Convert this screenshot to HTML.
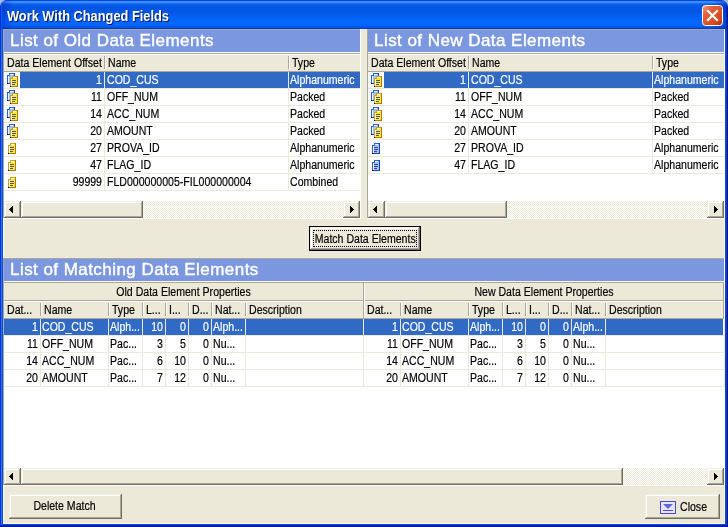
<!DOCTYPE html>
<html><head><meta charset="utf-8"><style>
html,body{margin:0;padding:0;}
body{width:728px;height:527px;position:relative;overflow:hidden;background:#A9B8DD;}
body>div,body>svg{position:absolute;}
.t{font-family:"Liberation Sans", sans-serif;font-size:12px;line-height:13px;transform:scaleX(0.88);white-space:nowrap;color:#000;filter:grayscale(1);-webkit-text-stroke:0.18px currentColor;}
</style></head><body>
<div style="left:0px;top:0px;width:728px;height:527px;background:#A9B8DD;"></div>
<div style="left:0px;top:0px;width:728px;height:29px;border-radius:7px 7px 0 0;background:linear-gradient(to bottom,#0848DC 0px,#0848DC 0.5px,#3C8EFF 1.5px,#3A8AFF 2.5px,#1A70F6 3.5px,#0A5EEA 4.5px,#0356E4 7px,#0356E4 12px,#0360F2 17px,#0567FF 21px,#0565FC 25px,#0358EC 27px,#0040CC 28.5px,#0040CC 29px);"></div>
<div style="left:0px;top:0px;width:728px;height:29px;border-radius:7px 7px 0 0;background:linear-gradient(to right,rgba(0,30,180,.45) 0px,rgba(0,30,180,0) 14px,rgba(0,30,180,0) 712px,rgba(0,30,160,.5) 728px);"></div>
<div style="left:0px;top:6px;width:1px;height:521px;background:#0032D8;"></div>
<div style="left:1px;top:4px;width:1px;height:523px;background:#1062F2;opacity:.8"></div>
<div style="left:2px;top:29px;width:1px;height:498px;background:#0250E2;"></div>
<div style="left:725px;top:29px;width:1px;height:498px;background:#0344E2;"></div>
<div style="left:726px;top:5px;width:1px;height:522px;background:#0024B4;opacity:.85"></div>
<div style="left:727px;top:7px;width:1px;height:520px;background:#001A92;"></div>
<div style="left:2px;top:524px;width:724px;height:1px;background:#0344E2;"></div>
<div style="left:1px;top:525px;width:726px;height:1px;background:#0024B4;"></div>
<div style="left:0px;top:526px;width:728px;height:1px;background:#001A92;"></div>
<div style="left:3px;top:29px;width:722px;height:495px;background:#ECE9D8;"></div>
<div style="left:724px;top:29px;width:1px;height:495px;background:#FFF8E0;"></div>
<div style="left:3px;top:29px;width:1px;height:495px;background:#FFF8E0;"></div>
<div style="left:3px;top:523px;width:722px;height:1px;background:#FFF8E0;"></div>
<div class="t" style="left:8px;top:9px;font-weight:bold;font-size:14px;line-height:16px;transform:scaleX(0.915);transform-origin:0 0;filter:none;-webkit-text-stroke:0;color:#0A1A60;">Work With Changed Fields</div>
<div class="t" style="left:7px;top:8px;font-weight:bold;font-size:14px;line-height:16px;transform:scaleX(0.915);transform-origin:0 0;filter:none;-webkit-text-stroke:0;color:#fff;">Work With Changed Fields</div>
<svg style="position:absolute;left:702px;top:5px" width="21" height="21" viewBox="0 0 21 21">
<defs><linearGradient id="cg" x1="0" y1="0" x2="1" y2="1"><stop offset="0" stop-color="#F2A088"/><stop offset="0.3" stop-color="#E5603A"/><stop offset="0.75" stop-color="#D8481E"/><stop offset="1" stop-color="#B8300A"/></linearGradient></defs>
<rect x="0.5" y="0.5" width="20" height="20" rx="3" fill="url(#cg)" stroke="#fff"/>
<path d="M6 6L15 15M15 6L6 15" stroke="#fff" stroke-width="2.2" stroke-linecap="square"/>
</svg>
<div style="left:3px;top:29px;width:358px;height:190px;background:#fff;"></div>
<div style="left:3px;top:29px;width:357px;height:1px;background:#ACA899;"></div>
<div style="left:3px;top:29px;width:1px;height:189px;background:#ACA899;"></div>
<div style="left:360px;top:29px;width:1px;height:190px;background:#fff;"></div>
<div style="left:3px;top:218px;width:358px;height:1px;background:#fff;"></div>
<div style="left:4px;top:30px;width:356px;height:22px;background:#7B97DF;"></div>
<div class="t" style="left:10px;top:31px;font-size:17px;line-height:20px;color:#fff;letter-spacing:0.45px;transform:none;-webkit-text-stroke:0.4px #fff">List of Old Data Elements</div>
<div style="left:4px;top:52px;width:356px;height:1px;background:#fff;"></div>
<div style="left:4px;top:53px;width:356px;height:1px;background:#ACA899;"></div>
<div style="left:4px;top:54px;width:356px;height:17px;background:#ECE9D8;"></div>
<div style="left:4px;top:54px;width:356px;height:1px;background:#fff;"></div>
<div style="left:4px;top:71px;width:356px;height:1px;background:#ACA899;"></div>
<div style="left:104px;top:56px;width:1px;height:13px;background:#ACA899;"></div>
<div style="left:105px;top:56px;width:1px;height:13px;background:#fff;"></div>
<div style="left:288px;top:56px;width:1px;height:13px;background:#ACA899;"></div>
<div style="left:289px;top:56px;width:1px;height:13px;background:#fff;"></div>
<div class="t" style="left:7px;top:57px;transform-origin:0 0;">Data Element Offset</div>
<div class="t" style="left:108px;top:57px;transform-origin:0 0;">Name</div>
<div class="t" style="left:292px;top:57px;transform-origin:0 0;">Type</div>
<div style="left:20px;top:72px;width:84px;height:16px;background:#316AC5;"></div>
<div style="left:105px;top:72px;width:183px;height:16px;background:#316AC5;"></div>
<div style="left:289px;top:72px;width:71px;height:16px;background:#316AC5;"></div>
<div style="left:4px;top:88px;width:356px;height:1px;background:#ECE9D8;"></div>
<svg style="position:absolute;left:6px;top:72px" width="16" height="16" shape-rendering="crispEdges"><rect x="2" y="3" width="6" height="8" fill="#9EC4FF"/><rect x="4" y="2" width="4" height="1" fill="#9EC4FF"/><rect x="2" y="4" width="1" height="7" fill="#F4F8FF"/><rect x="4" y="2" width="3" height="1" fill="#F4F8FF"/><rect x="3" y="1" width="6" height="1" fill="#2A5EE0"/><rect x="3" y="1" width="1" height="3" fill="#2A5EE0"/><rect x="1" y="3" width="3" height="1" fill="#2A5EE0"/><rect x="1" y="3" width="1" height="9" fill="#2A5EE0"/><rect x="8" y="1" width="1" height="11" fill="#1A3FC0"/><rect x="1" y="11" width="8" height="1" fill="#1A3FC0"/><rect x="1" y="11" width="1" height="1" fill="#000"/><rect x="5" y="6" width="6" height="8" fill="#FFE838"/><rect x="7" y="5" width="4" height="1" fill="#FFE838"/><rect x="5" y="7" width="1" height="7" fill="#FFFCE0"/><rect x="7" y="5" width="3" height="1" fill="#FFFCE0"/><rect x="6" y="4" width="6" height="1" fill="#D0A020"/><rect x="6" y="4" width="1" height="3" fill="#D0A020"/><rect x="4" y="6" width="3" height="1" fill="#D0A020"/><rect x="4" y="6" width="1" height="9" fill="#D0A020"/><rect x="11" y="4" width="1" height="11" fill="#B07A08"/><rect x="4" y="14" width="8" height="1" fill="#B07A08"/><rect x="6" y="8" width="4" height="1" fill="#4E5678"/><rect x="6" y="10" width="4" height="1" fill="#4E5678"/><rect x="6" y="12" width="3" height="1" fill="#4E5678"/><rect x="4" y="14" width="1" height="1" fill="#000"/></svg>
<div class="t" style="left:4px;top:74px;width:98px;text-align:right;transform-origin:100% 0;color:#fff;">1</div>
<div class="t" style="left:107px;top:74px;transform-origin:0 0;color:#fff;">COD_CUS</div>
<div class="t" style="left:290px;top:74px;transform-origin:0 0;color:#fff;">Alphanumeric</div>
<div style="left:4px;top:105px;width:356px;height:1px;background:#ECE9D8;"></div>
<svg style="position:absolute;left:6px;top:89px" width="16" height="16" shape-rendering="crispEdges"><rect x="2" y="3" width="6" height="8" fill="#9EC4FF"/><rect x="4" y="2" width="4" height="1" fill="#9EC4FF"/><rect x="2" y="4" width="1" height="7" fill="#F4F8FF"/><rect x="4" y="2" width="3" height="1" fill="#F4F8FF"/><rect x="3" y="1" width="6" height="1" fill="#2A5EE0"/><rect x="3" y="1" width="1" height="3" fill="#2A5EE0"/><rect x="1" y="3" width="3" height="1" fill="#2A5EE0"/><rect x="1" y="3" width="1" height="9" fill="#2A5EE0"/><rect x="8" y="1" width="1" height="11" fill="#1A3FC0"/><rect x="1" y="11" width="8" height="1" fill="#1A3FC0"/><rect x="1" y="11" width="1" height="1" fill="#000"/><rect x="5" y="6" width="6" height="8" fill="#FFE838"/><rect x="7" y="5" width="4" height="1" fill="#FFE838"/><rect x="5" y="7" width="1" height="7" fill="#FFFCE0"/><rect x="7" y="5" width="3" height="1" fill="#FFFCE0"/><rect x="6" y="4" width="6" height="1" fill="#D0A020"/><rect x="6" y="4" width="1" height="3" fill="#D0A020"/><rect x="4" y="6" width="3" height="1" fill="#D0A020"/><rect x="4" y="6" width="1" height="9" fill="#D0A020"/><rect x="11" y="4" width="1" height="11" fill="#B07A08"/><rect x="4" y="14" width="8" height="1" fill="#B07A08"/><rect x="6" y="8" width="4" height="1" fill="#4E5678"/><rect x="6" y="10" width="4" height="1" fill="#4E5678"/><rect x="6" y="12" width="3" height="1" fill="#4E5678"/><rect x="4" y="14" width="1" height="1" fill="#000"/></svg>
<div class="t" style="left:4px;top:91px;width:98px;text-align:right;transform-origin:100% 0;color:#000;">11</div>
<div class="t" style="left:107px;top:91px;transform-origin:0 0;color:#000;">OFF_NUM</div>
<div class="t" style="left:290px;top:91px;transform-origin:0 0;color:#000;">Packed</div>
<div style="left:4px;top:122px;width:356px;height:1px;background:#ECE9D8;"></div>
<svg style="position:absolute;left:6px;top:106px" width="16" height="16" shape-rendering="crispEdges"><rect x="2" y="3" width="6" height="8" fill="#9EC4FF"/><rect x="4" y="2" width="4" height="1" fill="#9EC4FF"/><rect x="2" y="4" width="1" height="7" fill="#F4F8FF"/><rect x="4" y="2" width="3" height="1" fill="#F4F8FF"/><rect x="3" y="1" width="6" height="1" fill="#2A5EE0"/><rect x="3" y="1" width="1" height="3" fill="#2A5EE0"/><rect x="1" y="3" width="3" height="1" fill="#2A5EE0"/><rect x="1" y="3" width="1" height="9" fill="#2A5EE0"/><rect x="8" y="1" width="1" height="11" fill="#1A3FC0"/><rect x="1" y="11" width="8" height="1" fill="#1A3FC0"/><rect x="1" y="11" width="1" height="1" fill="#000"/><rect x="5" y="6" width="6" height="8" fill="#FFE838"/><rect x="7" y="5" width="4" height="1" fill="#FFE838"/><rect x="5" y="7" width="1" height="7" fill="#FFFCE0"/><rect x="7" y="5" width="3" height="1" fill="#FFFCE0"/><rect x="6" y="4" width="6" height="1" fill="#D0A020"/><rect x="6" y="4" width="1" height="3" fill="#D0A020"/><rect x="4" y="6" width="3" height="1" fill="#D0A020"/><rect x="4" y="6" width="1" height="9" fill="#D0A020"/><rect x="11" y="4" width="1" height="11" fill="#B07A08"/><rect x="4" y="14" width="8" height="1" fill="#B07A08"/><rect x="6" y="8" width="4" height="1" fill="#4E5678"/><rect x="6" y="10" width="4" height="1" fill="#4E5678"/><rect x="6" y="12" width="3" height="1" fill="#4E5678"/><rect x="4" y="14" width="1" height="1" fill="#000"/></svg>
<div class="t" style="left:4px;top:108px;width:98px;text-align:right;transform-origin:100% 0;color:#000;">14</div>
<div class="t" style="left:107px;top:108px;transform-origin:0 0;color:#000;">ACC_NUM</div>
<div class="t" style="left:290px;top:108px;transform-origin:0 0;color:#000;">Packed</div>
<div style="left:4px;top:139px;width:356px;height:1px;background:#ECE9D8;"></div>
<svg style="position:absolute;left:6px;top:123px" width="16" height="16" shape-rendering="crispEdges"><rect x="2" y="3" width="6" height="8" fill="#9EC4FF"/><rect x="4" y="2" width="4" height="1" fill="#9EC4FF"/><rect x="2" y="4" width="1" height="7" fill="#F4F8FF"/><rect x="4" y="2" width="3" height="1" fill="#F4F8FF"/><rect x="3" y="1" width="6" height="1" fill="#2A5EE0"/><rect x="3" y="1" width="1" height="3" fill="#2A5EE0"/><rect x="1" y="3" width="3" height="1" fill="#2A5EE0"/><rect x="1" y="3" width="1" height="9" fill="#2A5EE0"/><rect x="8" y="1" width="1" height="11" fill="#1A3FC0"/><rect x="1" y="11" width="8" height="1" fill="#1A3FC0"/><rect x="1" y="11" width="1" height="1" fill="#000"/><rect x="5" y="6" width="6" height="8" fill="#FFE838"/><rect x="7" y="5" width="4" height="1" fill="#FFE838"/><rect x="5" y="7" width="1" height="7" fill="#FFFCE0"/><rect x="7" y="5" width="3" height="1" fill="#FFFCE0"/><rect x="6" y="4" width="6" height="1" fill="#D0A020"/><rect x="6" y="4" width="1" height="3" fill="#D0A020"/><rect x="4" y="6" width="3" height="1" fill="#D0A020"/><rect x="4" y="6" width="1" height="9" fill="#D0A020"/><rect x="11" y="4" width="1" height="11" fill="#B07A08"/><rect x="4" y="14" width="8" height="1" fill="#B07A08"/><rect x="6" y="8" width="4" height="1" fill="#4E5678"/><rect x="6" y="10" width="4" height="1" fill="#4E5678"/><rect x="6" y="12" width="3" height="1" fill="#4E5678"/><rect x="4" y="14" width="1" height="1" fill="#000"/></svg>
<div class="t" style="left:4px;top:125px;width:98px;text-align:right;transform-origin:100% 0;color:#000;">20</div>
<div class="t" style="left:107px;top:125px;transform-origin:0 0;color:#000;">AMOUNT</div>
<div class="t" style="left:290px;top:125px;transform-origin:0 0;color:#000;">Packed</div>
<div style="left:4px;top:156px;width:356px;height:1px;background:#ECE9D8;"></div>
<svg style="position:absolute;left:8px;top:143px" width="8" height="11" shape-rendering="crispEdges"><rect x="1" y="2" width="6" height="8" fill="#FFE838"/><rect x="3" y="1" width="4" height="1" fill="#FFE838"/><rect x="1" y="3" width="1" height="7" fill="#FFFCE0"/><rect x="3" y="1" width="3" height="1" fill="#FFFCE0"/><rect x="2" y="0" width="6" height="1" fill="#D0A020"/><rect x="2" y="0" width="1" height="3" fill="#D0A020"/><rect x="0" y="2" width="3" height="1" fill="#D0A020"/><rect x="0" y="2" width="1" height="9" fill="#D0A020"/><rect x="7" y="0" width="1" height="11" fill="#B07A08"/><rect x="0" y="10" width="8" height="1" fill="#B07A08"/><rect x="2" y="4" width="4" height="1" fill="#4E5678"/><rect x="2" y="6" width="4" height="1" fill="#4E5678"/><rect x="2" y="8" width="3" height="1" fill="#4E5678"/><rect x="0" y="10" width="1" height="1" fill="#000"/></svg>
<div class="t" style="left:4px;top:142px;width:98px;text-align:right;transform-origin:100% 0;color:#000;">27</div>
<div class="t" style="left:107px;top:142px;transform-origin:0 0;color:#000;">PROVA_ID</div>
<div class="t" style="left:290px;top:142px;transform-origin:0 0;color:#000;">Alphanumeric</div>
<div style="left:4px;top:173px;width:356px;height:1px;background:#ECE9D8;"></div>
<svg style="position:absolute;left:8px;top:160px" width="8" height="11" shape-rendering="crispEdges"><rect x="1" y="2" width="6" height="8" fill="#FFE838"/><rect x="3" y="1" width="4" height="1" fill="#FFE838"/><rect x="1" y="3" width="1" height="7" fill="#FFFCE0"/><rect x="3" y="1" width="3" height="1" fill="#FFFCE0"/><rect x="2" y="0" width="6" height="1" fill="#D0A020"/><rect x="2" y="0" width="1" height="3" fill="#D0A020"/><rect x="0" y="2" width="3" height="1" fill="#D0A020"/><rect x="0" y="2" width="1" height="9" fill="#D0A020"/><rect x="7" y="0" width="1" height="11" fill="#B07A08"/><rect x="0" y="10" width="8" height="1" fill="#B07A08"/><rect x="2" y="4" width="4" height="1" fill="#4E5678"/><rect x="2" y="6" width="4" height="1" fill="#4E5678"/><rect x="2" y="8" width="3" height="1" fill="#4E5678"/><rect x="0" y="10" width="1" height="1" fill="#000"/></svg>
<div class="t" style="left:4px;top:159px;width:98px;text-align:right;transform-origin:100% 0;color:#000;">47</div>
<div class="t" style="left:107px;top:159px;transform-origin:0 0;color:#000;">FLAG_ID</div>
<div class="t" style="left:290px;top:159px;transform-origin:0 0;color:#000;">Alphanumeric</div>
<div style="left:4px;top:190px;width:356px;height:1px;background:#ECE9D8;"></div>
<svg style="position:absolute;left:8px;top:177px" width="8" height="11" shape-rendering="crispEdges"><rect x="1" y="2" width="6" height="8" fill="#FFE838"/><rect x="3" y="1" width="4" height="1" fill="#FFE838"/><rect x="1" y="3" width="1" height="7" fill="#FFFCE0"/><rect x="3" y="1" width="3" height="1" fill="#FFFCE0"/><rect x="2" y="0" width="6" height="1" fill="#D0A020"/><rect x="2" y="0" width="1" height="3" fill="#D0A020"/><rect x="0" y="2" width="3" height="1" fill="#D0A020"/><rect x="0" y="2" width="1" height="9" fill="#D0A020"/><rect x="7" y="0" width="1" height="11" fill="#B07A08"/><rect x="0" y="10" width="8" height="1" fill="#B07A08"/><rect x="2" y="4" width="4" height="1" fill="#4E5678"/><rect x="2" y="6" width="4" height="1" fill="#4E5678"/><rect x="2" y="8" width="3" height="1" fill="#4E5678"/><rect x="0" y="10" width="1" height="1" fill="#000"/></svg>
<div class="t" style="left:4px;top:176px;width:98px;text-align:right;transform-origin:100% 0;color:#000;">99999</div>
<div class="t" style="left:107px;top:176px;transform-origin:0 0;color:#000;">FLD000000005-FIL000000004</div>
<div class="t" style="left:290px;top:176px;transform-origin:0 0;color:#000;">Combined</div>
<div style="left:104px;top:72px;width:1px;height:119px;background:#ECE9D8;"></div>
<div style="left:288px;top:72px;width:1px;height:119px;background:#ECE9D8;"></div>
<div style="left:4px;top:201px;width:356px;height:17px;background:repeating-conic-gradient(#ECE9D8 0 25%, #fff 0 50%) 0 0/2px 2px;"></div>
<div style="left:4px;top:201px;width:17px;height:17px;background:#716F64;"></div>
<div style="left:4px;top:201px;width:16px;height:16px;background:#F1EFE2;"></div>
<div style="left:5px;top:202px;width:15px;height:15px;background:#ACA899;"></div>
<div style="left:5px;top:202px;width:14px;height:14px;background:#fff;"></div>
<div style="left:6px;top:203px;width:13px;height:13px;background:#ECE9D8;"></div>
<div style="left:12px;top:206px;width:1px;height:7px;background:#000;"></div>
<div style="left:11px;top:207px;width:1px;height:5px;background:#000;"></div>
<div style="left:10px;top:208px;width:1px;height:3px;background:#000;"></div>
<div style="left:9px;top:209px;width:1px;height:1px;background:#000;"></div>
<div style="left:21px;top:201px;width:122px;height:17px;background:#716F64;"></div>
<div style="left:21px;top:201px;width:121px;height:16px;background:#F1EFE2;"></div>
<div style="left:22px;top:202px;width:120px;height:15px;background:#ACA899;"></div>
<div style="left:22px;top:202px;width:119px;height:14px;background:#fff;"></div>
<div style="left:23px;top:203px;width:118px;height:13px;background:#ECE9D8;"></div>
<div style="left:343px;top:201px;width:17px;height:17px;background:#716F64;"></div>
<div style="left:343px;top:201px;width:16px;height:16px;background:#F1EFE2;"></div>
<div style="left:344px;top:202px;width:15px;height:15px;background:#ACA899;"></div>
<div style="left:344px;top:202px;width:14px;height:14px;background:#fff;"></div>
<div style="left:345px;top:203px;width:13px;height:13px;background:#ECE9D8;"></div>
<div style="left:350px;top:206px;width:1px;height:7px;background:#000;"></div>
<div style="left:351px;top:207px;width:1px;height:5px;background:#000;"></div>
<div style="left:352px;top:208px;width:1px;height:3px;background:#000;"></div>
<div style="left:353px;top:209px;width:1px;height:1px;background:#000;"></div>
<div style="left:367px;top:29px;width:358px;height:190px;background:#fff;"></div>
<div style="left:367px;top:29px;width:357px;height:1px;background:#ACA899;"></div>
<div style="left:367px;top:29px;width:1px;height:189px;background:#ACA899;"></div>
<div style="left:724px;top:29px;width:1px;height:190px;background:#fff;"></div>
<div style="left:367px;top:218px;width:358px;height:1px;background:#fff;"></div>
<div style="left:368px;top:30px;width:356px;height:22px;background:#7B97DF;"></div>
<div class="t" style="left:374px;top:31px;font-size:17px;line-height:20px;color:#fff;letter-spacing:0.45px;transform:none;-webkit-text-stroke:0.4px #fff">List of New Data Elements</div>
<div style="left:368px;top:52px;width:356px;height:1px;background:#fff;"></div>
<div style="left:368px;top:53px;width:356px;height:1px;background:#ACA899;"></div>
<div style="left:368px;top:54px;width:356px;height:17px;background:#ECE9D8;"></div>
<div style="left:368px;top:54px;width:356px;height:1px;background:#fff;"></div>
<div style="left:368px;top:71px;width:356px;height:1px;background:#ACA899;"></div>
<div style="left:468px;top:56px;width:1px;height:13px;background:#ACA899;"></div>
<div style="left:469px;top:56px;width:1px;height:13px;background:#fff;"></div>
<div style="left:652px;top:56px;width:1px;height:13px;background:#ACA899;"></div>
<div style="left:653px;top:56px;width:1px;height:13px;background:#fff;"></div>
<div class="t" style="left:371px;top:57px;transform-origin:0 0;">Data Element Offset</div>
<div class="t" style="left:472px;top:57px;transform-origin:0 0;">Name</div>
<div class="t" style="left:656px;top:57px;transform-origin:0 0;">Type</div>
<div style="left:384px;top:72px;width:84px;height:16px;background:#316AC5;"></div>
<div style="left:469px;top:72px;width:183px;height:16px;background:#316AC5;"></div>
<div style="left:653px;top:72px;width:71px;height:16px;background:#316AC5;"></div>
<div style="left:368px;top:88px;width:356px;height:1px;background:#ECE9D8;"></div>
<svg style="position:absolute;left:370px;top:72px" width="16" height="16" shape-rendering="crispEdges"><rect x="2" y="3" width="6" height="8" fill="#9EC4FF"/><rect x="4" y="2" width="4" height="1" fill="#9EC4FF"/><rect x="2" y="4" width="1" height="7" fill="#F4F8FF"/><rect x="4" y="2" width="3" height="1" fill="#F4F8FF"/><rect x="3" y="1" width="6" height="1" fill="#2A5EE0"/><rect x="3" y="1" width="1" height="3" fill="#2A5EE0"/><rect x="1" y="3" width="3" height="1" fill="#2A5EE0"/><rect x="1" y="3" width="1" height="9" fill="#2A5EE0"/><rect x="8" y="1" width="1" height="11" fill="#1A3FC0"/><rect x="1" y="11" width="8" height="1" fill="#1A3FC0"/><rect x="1" y="11" width="1" height="1" fill="#000"/><rect x="5" y="6" width="6" height="8" fill="#FFE838"/><rect x="7" y="5" width="4" height="1" fill="#FFE838"/><rect x="5" y="7" width="1" height="7" fill="#FFFCE0"/><rect x="7" y="5" width="3" height="1" fill="#FFFCE0"/><rect x="6" y="4" width="6" height="1" fill="#D0A020"/><rect x="6" y="4" width="1" height="3" fill="#D0A020"/><rect x="4" y="6" width="3" height="1" fill="#D0A020"/><rect x="4" y="6" width="1" height="9" fill="#D0A020"/><rect x="11" y="4" width="1" height="11" fill="#B07A08"/><rect x="4" y="14" width="8" height="1" fill="#B07A08"/><rect x="6" y="8" width="4" height="1" fill="#4E5678"/><rect x="6" y="10" width="4" height="1" fill="#4E5678"/><rect x="6" y="12" width="3" height="1" fill="#4E5678"/><rect x="4" y="14" width="1" height="1" fill="#000"/></svg>
<div class="t" style="left:368px;top:74px;width:98px;text-align:right;transform-origin:100% 0;color:#fff;">1</div>
<div class="t" style="left:471px;top:74px;transform-origin:0 0;color:#fff;">COD_CUS</div>
<div class="t" style="left:654px;top:74px;transform-origin:0 0;color:#fff;">Alphanumeric</div>
<div style="left:368px;top:105px;width:356px;height:1px;background:#ECE9D8;"></div>
<svg style="position:absolute;left:370px;top:89px" width="16" height="16" shape-rendering="crispEdges"><rect x="2" y="3" width="6" height="8" fill="#9EC4FF"/><rect x="4" y="2" width="4" height="1" fill="#9EC4FF"/><rect x="2" y="4" width="1" height="7" fill="#F4F8FF"/><rect x="4" y="2" width="3" height="1" fill="#F4F8FF"/><rect x="3" y="1" width="6" height="1" fill="#2A5EE0"/><rect x="3" y="1" width="1" height="3" fill="#2A5EE0"/><rect x="1" y="3" width="3" height="1" fill="#2A5EE0"/><rect x="1" y="3" width="1" height="9" fill="#2A5EE0"/><rect x="8" y="1" width="1" height="11" fill="#1A3FC0"/><rect x="1" y="11" width="8" height="1" fill="#1A3FC0"/><rect x="1" y="11" width="1" height="1" fill="#000"/><rect x="5" y="6" width="6" height="8" fill="#FFE838"/><rect x="7" y="5" width="4" height="1" fill="#FFE838"/><rect x="5" y="7" width="1" height="7" fill="#FFFCE0"/><rect x="7" y="5" width="3" height="1" fill="#FFFCE0"/><rect x="6" y="4" width="6" height="1" fill="#D0A020"/><rect x="6" y="4" width="1" height="3" fill="#D0A020"/><rect x="4" y="6" width="3" height="1" fill="#D0A020"/><rect x="4" y="6" width="1" height="9" fill="#D0A020"/><rect x="11" y="4" width="1" height="11" fill="#B07A08"/><rect x="4" y="14" width="8" height="1" fill="#B07A08"/><rect x="6" y="8" width="4" height="1" fill="#4E5678"/><rect x="6" y="10" width="4" height="1" fill="#4E5678"/><rect x="6" y="12" width="3" height="1" fill="#4E5678"/><rect x="4" y="14" width="1" height="1" fill="#000"/></svg>
<div class="t" style="left:368px;top:91px;width:98px;text-align:right;transform-origin:100% 0;color:#000;">11</div>
<div class="t" style="left:471px;top:91px;transform-origin:0 0;color:#000;">OFF_NUM</div>
<div class="t" style="left:654px;top:91px;transform-origin:0 0;color:#000;">Packed</div>
<div style="left:368px;top:122px;width:356px;height:1px;background:#ECE9D8;"></div>
<svg style="position:absolute;left:370px;top:106px" width="16" height="16" shape-rendering="crispEdges"><rect x="2" y="3" width="6" height="8" fill="#9EC4FF"/><rect x="4" y="2" width="4" height="1" fill="#9EC4FF"/><rect x="2" y="4" width="1" height="7" fill="#F4F8FF"/><rect x="4" y="2" width="3" height="1" fill="#F4F8FF"/><rect x="3" y="1" width="6" height="1" fill="#2A5EE0"/><rect x="3" y="1" width="1" height="3" fill="#2A5EE0"/><rect x="1" y="3" width="3" height="1" fill="#2A5EE0"/><rect x="1" y="3" width="1" height="9" fill="#2A5EE0"/><rect x="8" y="1" width="1" height="11" fill="#1A3FC0"/><rect x="1" y="11" width="8" height="1" fill="#1A3FC0"/><rect x="1" y="11" width="1" height="1" fill="#000"/><rect x="5" y="6" width="6" height="8" fill="#FFE838"/><rect x="7" y="5" width="4" height="1" fill="#FFE838"/><rect x="5" y="7" width="1" height="7" fill="#FFFCE0"/><rect x="7" y="5" width="3" height="1" fill="#FFFCE0"/><rect x="6" y="4" width="6" height="1" fill="#D0A020"/><rect x="6" y="4" width="1" height="3" fill="#D0A020"/><rect x="4" y="6" width="3" height="1" fill="#D0A020"/><rect x="4" y="6" width="1" height="9" fill="#D0A020"/><rect x="11" y="4" width="1" height="11" fill="#B07A08"/><rect x="4" y="14" width="8" height="1" fill="#B07A08"/><rect x="6" y="8" width="4" height="1" fill="#4E5678"/><rect x="6" y="10" width="4" height="1" fill="#4E5678"/><rect x="6" y="12" width="3" height="1" fill="#4E5678"/><rect x="4" y="14" width="1" height="1" fill="#000"/></svg>
<div class="t" style="left:368px;top:108px;width:98px;text-align:right;transform-origin:100% 0;color:#000;">14</div>
<div class="t" style="left:471px;top:108px;transform-origin:0 0;color:#000;">ACC_NUM</div>
<div class="t" style="left:654px;top:108px;transform-origin:0 0;color:#000;">Packed</div>
<div style="left:368px;top:139px;width:356px;height:1px;background:#ECE9D8;"></div>
<svg style="position:absolute;left:370px;top:123px" width="16" height="16" shape-rendering="crispEdges"><rect x="2" y="3" width="6" height="8" fill="#9EC4FF"/><rect x="4" y="2" width="4" height="1" fill="#9EC4FF"/><rect x="2" y="4" width="1" height="7" fill="#F4F8FF"/><rect x="4" y="2" width="3" height="1" fill="#F4F8FF"/><rect x="3" y="1" width="6" height="1" fill="#2A5EE0"/><rect x="3" y="1" width="1" height="3" fill="#2A5EE0"/><rect x="1" y="3" width="3" height="1" fill="#2A5EE0"/><rect x="1" y="3" width="1" height="9" fill="#2A5EE0"/><rect x="8" y="1" width="1" height="11" fill="#1A3FC0"/><rect x="1" y="11" width="8" height="1" fill="#1A3FC0"/><rect x="1" y="11" width="1" height="1" fill="#000"/><rect x="5" y="6" width="6" height="8" fill="#FFE838"/><rect x="7" y="5" width="4" height="1" fill="#FFE838"/><rect x="5" y="7" width="1" height="7" fill="#FFFCE0"/><rect x="7" y="5" width="3" height="1" fill="#FFFCE0"/><rect x="6" y="4" width="6" height="1" fill="#D0A020"/><rect x="6" y="4" width="1" height="3" fill="#D0A020"/><rect x="4" y="6" width="3" height="1" fill="#D0A020"/><rect x="4" y="6" width="1" height="9" fill="#D0A020"/><rect x="11" y="4" width="1" height="11" fill="#B07A08"/><rect x="4" y="14" width="8" height="1" fill="#B07A08"/><rect x="6" y="8" width="4" height="1" fill="#4E5678"/><rect x="6" y="10" width="4" height="1" fill="#4E5678"/><rect x="6" y="12" width="3" height="1" fill="#4E5678"/><rect x="4" y="14" width="1" height="1" fill="#000"/></svg>
<div class="t" style="left:368px;top:125px;width:98px;text-align:right;transform-origin:100% 0;color:#000;">20</div>
<div class="t" style="left:471px;top:125px;transform-origin:0 0;color:#000;">AMOUNT</div>
<div class="t" style="left:654px;top:125px;transform-origin:0 0;color:#000;">Packed</div>
<div style="left:368px;top:156px;width:356px;height:1px;background:#ECE9D8;"></div>
<svg style="position:absolute;left:372px;top:143px" width="8" height="11" shape-rendering="crispEdges"><rect x="1" y="2" width="6" height="8" fill="#9EC4FF"/><rect x="3" y="1" width="4" height="1" fill="#9EC4FF"/><rect x="1" y="3" width="1" height="7" fill="#F4F8FF"/><rect x="3" y="1" width="3" height="1" fill="#F4F8FF"/><rect x="2" y="0" width="6" height="1" fill="#2A5EE0"/><rect x="2" y="0" width="1" height="3" fill="#2A5EE0"/><rect x="0" y="2" width="3" height="1" fill="#2A5EE0"/><rect x="0" y="2" width="1" height="9" fill="#2A5EE0"/><rect x="7" y="0" width="1" height="11" fill="#1A3FC0"/><rect x="0" y="10" width="8" height="1" fill="#1A3FC0"/><rect x="2" y="4" width="4" height="1" fill="#3E4670"/><rect x="2" y="6" width="4" height="1" fill="#3E4670"/><rect x="2" y="8" width="3" height="1" fill="#3E4670"/><rect x="0" y="10" width="1" height="1" fill="#000"/></svg>
<div class="t" style="left:368px;top:142px;width:98px;text-align:right;transform-origin:100% 0;color:#000;">27</div>
<div class="t" style="left:471px;top:142px;transform-origin:0 0;color:#000;">PROVA_ID</div>
<div class="t" style="left:654px;top:142px;transform-origin:0 0;color:#000;">Alphanumeric</div>
<div style="left:368px;top:173px;width:356px;height:1px;background:#ECE9D8;"></div>
<svg style="position:absolute;left:372px;top:160px" width="8" height="11" shape-rendering="crispEdges"><rect x="1" y="2" width="6" height="8" fill="#9EC4FF"/><rect x="3" y="1" width="4" height="1" fill="#9EC4FF"/><rect x="1" y="3" width="1" height="7" fill="#F4F8FF"/><rect x="3" y="1" width="3" height="1" fill="#F4F8FF"/><rect x="2" y="0" width="6" height="1" fill="#2A5EE0"/><rect x="2" y="0" width="1" height="3" fill="#2A5EE0"/><rect x="0" y="2" width="3" height="1" fill="#2A5EE0"/><rect x="0" y="2" width="1" height="9" fill="#2A5EE0"/><rect x="7" y="0" width="1" height="11" fill="#1A3FC0"/><rect x="0" y="10" width="8" height="1" fill="#1A3FC0"/><rect x="2" y="4" width="4" height="1" fill="#3E4670"/><rect x="2" y="6" width="4" height="1" fill="#3E4670"/><rect x="2" y="8" width="3" height="1" fill="#3E4670"/><rect x="0" y="10" width="1" height="1" fill="#000"/></svg>
<div class="t" style="left:368px;top:159px;width:98px;text-align:right;transform-origin:100% 0;color:#000;">47</div>
<div class="t" style="left:471px;top:159px;transform-origin:0 0;color:#000;">FLAG_ID</div>
<div class="t" style="left:654px;top:159px;transform-origin:0 0;color:#000;">Alphanumeric</div>
<div style="left:468px;top:72px;width:1px;height:102px;background:#ECE9D8;"></div>
<div style="left:652px;top:72px;width:1px;height:102px;background:#ECE9D8;"></div>
<div style="left:368px;top:201px;width:356px;height:17px;background:repeating-conic-gradient(#ECE9D8 0 25%, #fff 0 50%) 0 0/2px 2px;"></div>
<div style="left:368px;top:201px;width:17px;height:17px;background:#716F64;"></div>
<div style="left:368px;top:201px;width:16px;height:16px;background:#F1EFE2;"></div>
<div style="left:369px;top:202px;width:15px;height:15px;background:#ACA899;"></div>
<div style="left:369px;top:202px;width:14px;height:14px;background:#fff;"></div>
<div style="left:370px;top:203px;width:13px;height:13px;background:#ECE9D8;"></div>
<div style="left:376px;top:206px;width:1px;height:7px;background:#000;"></div>
<div style="left:375px;top:207px;width:1px;height:5px;background:#000;"></div>
<div style="left:374px;top:208px;width:1px;height:3px;background:#000;"></div>
<div style="left:373px;top:209px;width:1px;height:1px;background:#000;"></div>
<div style="left:385px;top:201px;width:122px;height:17px;background:#716F64;"></div>
<div style="left:385px;top:201px;width:121px;height:16px;background:#F1EFE2;"></div>
<div style="left:386px;top:202px;width:120px;height:15px;background:#ACA899;"></div>
<div style="left:386px;top:202px;width:119px;height:14px;background:#fff;"></div>
<div style="left:387px;top:203px;width:118px;height:13px;background:#ECE9D8;"></div>
<div style="left:707px;top:201px;width:17px;height:17px;background:#716F64;"></div>
<div style="left:707px;top:201px;width:16px;height:16px;background:#F1EFE2;"></div>
<div style="left:708px;top:202px;width:15px;height:15px;background:#ACA899;"></div>
<div style="left:708px;top:202px;width:14px;height:14px;background:#fff;"></div>
<div style="left:709px;top:203px;width:13px;height:13px;background:#ECE9D8;"></div>
<div style="left:714px;top:206px;width:1px;height:7px;background:#000;"></div>
<div style="left:715px;top:207px;width:1px;height:5px;background:#000;"></div>
<div style="left:716px;top:208px;width:1px;height:3px;background:#000;"></div>
<div style="left:717px;top:209px;width:1px;height:1px;background:#000;"></div>
<div style="left:309px;top:226px;width:112px;height:25px;background:#000;"></div>
<div style="left:310px;top:227px;width:110px;height:23px;background:#716F64;"></div>
<div style="left:310px;top:227px;width:109px;height:22px;background:#F1EFE2;"></div>
<div style="left:311px;top:228px;width:108px;height:21px;background:#ACA899;"></div>
<div style="left:311px;top:228px;width:107px;height:20px;background:#fff;"></div>
<div style="left:312px;top:229px;width:106px;height:19px;background:#ECE9D8;"></div>
<div style="left:313px;top:230px;width:104px;height:17px;border:1px dotted #000;box-sizing:border-box;"></div>
<div class="t" style="left:308px;top:233px;width:112px;text-align:center;transform-origin:50% 0;">Match Data Elements</div>
<div style="left:3px;top:258px;width:722px;height:228px;background:#fff;"></div>
<div style="left:3px;top:258px;width:721px;height:1px;background:#ACA899;"></div>
<div style="left:3px;top:258px;width:1px;height:227px;background:#ACA899;"></div>
<div style="left:4px;top:259px;width:720px;height:22px;background:#7B97DF;"></div>
<div class="t" style="left:10px;top:260px;font-size:17px;line-height:20px;color:#fff;letter-spacing:0.45px;transform:none;-webkit-text-stroke:0.4px #fff">List of Matching Data Elements</div>
<div style="left:4px;top:281px;width:720px;height:1px;background:#fff;"></div>
<div style="left:4px;top:282px;width:720px;height:1px;background:#ACA899;"></div>
<div style="left:4px;top:283px;width:720px;height:35px;background:#ECE9D8;"></div>
<div style="left:4px;top:300px;width:720px;height:1px;background:#ACA899;"></div>
<div style="left:4px;top:301px;width:720px;height:1px;background:#fff;"></div>
<div style="left:4px;top:318px;width:720px;height:1px;background:#ACA899;"></div>
<div style="left:723px;top:283px;width:1px;height:35px;background:#ACA899;"></div>
<div style="left:363px;top:283px;width:1px;height:35px;background:#ACA899;"></div>
<div style="left:364px;top:283px;width:1px;height:35px;background:#fff;"></div>
<div class="t" style="left:4px;top:286px;width:359px;text-align:center;transform-origin:50% 0;">Old Data Element Properties</div>
<div class="t" style="left:364px;top:286px;width:360px;text-align:center;transform-origin:50% 0;">New Data Element Properties</div>
<div class="t" style="left:7px;top:304px;transform-origin:0 0;">Dat...</div>
<div style="left:40px;top:303px;width:1px;height:13px;background:#ACA899;"></div>
<div style="left:41px;top:303px;width:1px;height:13px;background:#fff;"></div>
<div class="t" style="left:44px;top:304px;transform-origin:0 0;">Name</div>
<div style="left:108px;top:303px;width:1px;height:13px;background:#ACA899;"></div>
<div style="left:109px;top:303px;width:1px;height:13px;background:#fff;"></div>
<div class="t" style="left:112px;top:304px;transform-origin:0 0;">Type</div>
<div style="left:142px;top:303px;width:1px;height:13px;background:#ACA899;"></div>
<div style="left:143px;top:303px;width:1px;height:13px;background:#fff;"></div>
<div class="t" style="left:146px;top:304px;transform-origin:0 0;">L...</div>
<div style="left:165px;top:303px;width:1px;height:13px;background:#ACA899;"></div>
<div style="left:166px;top:303px;width:1px;height:13px;background:#fff;"></div>
<div class="t" style="left:169px;top:304px;transform-origin:0 0;">I...</div>
<div style="left:188px;top:303px;width:1px;height:13px;background:#ACA899;"></div>
<div style="left:189px;top:303px;width:1px;height:13px;background:#fff;"></div>
<div class="t" style="left:192px;top:304px;transform-origin:0 0;">D...</div>
<div style="left:211px;top:303px;width:1px;height:13px;background:#ACA899;"></div>
<div style="left:212px;top:303px;width:1px;height:13px;background:#fff;"></div>
<div class="t" style="left:215px;top:304px;transform-origin:0 0;">Nat...</div>
<div style="left:245px;top:303px;width:1px;height:13px;background:#ACA899;"></div>
<div style="left:246px;top:303px;width:1px;height:13px;background:#fff;"></div>
<div class="t" style="left:249px;top:304px;transform-origin:0 0;">Description</div>
<div style="left:4px;top:319px;width:36px;height:16px;background:#316AC5;"></div>
<div style="left:41px;top:319px;width:67px;height:16px;background:#316AC5;"></div>
<div style="left:109px;top:319px;width:33px;height:16px;background:#316AC5;"></div>
<div style="left:143px;top:319px;width:22px;height:16px;background:#316AC5;"></div>
<div style="left:166px;top:319px;width:22px;height:16px;background:#316AC5;"></div>
<div style="left:189px;top:319px;width:22px;height:16px;background:#316AC5;"></div>
<div style="left:212px;top:319px;width:33px;height:16px;background:#316AC5;"></div>
<div style="left:246px;top:319px;width:117px;height:16px;background:#316AC5;"></div>
<div style="left:4px;top:335px;width:359px;height:1px;background:#ECE9D8;"></div>
<div class="t" style="left:4px;top:321px;width:34px;text-align:right;transform-origin:100% 0;color:#fff;">1</div>
<div class="t" style="left:42px;top:321px;transform-origin:0 0;color:#fff;">COD_CUS</div>
<div class="t" style="left:110px;top:321px;transform-origin:0 0;color:#fff;">Alph...</div>
<div class="t" style="left:143px;top:321px;width:20px;text-align:right;transform-origin:100% 0;color:#fff;">10</div>
<div class="t" style="left:166px;top:321px;width:20px;text-align:right;transform-origin:100% 0;color:#fff;">0</div>
<div class="t" style="left:189px;top:321px;width:20px;text-align:right;transform-origin:100% 0;color:#fff;">0</div>
<div class="t" style="left:213px;top:321px;transform-origin:0 0;color:#fff;">Alph...</div>
<div style="left:4px;top:352px;width:359px;height:1px;background:#ECE9D8;"></div>
<div class="t" style="left:4px;top:338px;width:34px;text-align:right;transform-origin:100% 0;color:#000;">11</div>
<div class="t" style="left:42px;top:338px;transform-origin:0 0;color:#000;">OFF_NUM</div>
<div class="t" style="left:110px;top:338px;transform-origin:0 0;color:#000;">Pac...</div>
<div class="t" style="left:143px;top:338px;width:20px;text-align:right;transform-origin:100% 0;color:#000;">3</div>
<div class="t" style="left:166px;top:338px;width:20px;text-align:right;transform-origin:100% 0;color:#000;">5</div>
<div class="t" style="left:189px;top:338px;width:20px;text-align:right;transform-origin:100% 0;color:#000;">0</div>
<div class="t" style="left:213px;top:338px;transform-origin:0 0;color:#000;">Nu...</div>
<div style="left:4px;top:369px;width:359px;height:1px;background:#ECE9D8;"></div>
<div class="t" style="left:4px;top:355px;width:34px;text-align:right;transform-origin:100% 0;color:#000;">14</div>
<div class="t" style="left:42px;top:355px;transform-origin:0 0;color:#000;">ACC_NUM</div>
<div class="t" style="left:110px;top:355px;transform-origin:0 0;color:#000;">Pac...</div>
<div class="t" style="left:143px;top:355px;width:20px;text-align:right;transform-origin:100% 0;color:#000;">6</div>
<div class="t" style="left:166px;top:355px;width:20px;text-align:right;transform-origin:100% 0;color:#000;">10</div>
<div class="t" style="left:189px;top:355px;width:20px;text-align:right;transform-origin:100% 0;color:#000;">0</div>
<div class="t" style="left:213px;top:355px;transform-origin:0 0;color:#000;">Nu...</div>
<div style="left:4px;top:386px;width:359px;height:1px;background:#ECE9D8;"></div>
<div class="t" style="left:4px;top:372px;width:34px;text-align:right;transform-origin:100% 0;color:#000;">20</div>
<div class="t" style="left:42px;top:372px;transform-origin:0 0;color:#000;">AMOUNT</div>
<div class="t" style="left:110px;top:372px;transform-origin:0 0;color:#000;">Pac...</div>
<div class="t" style="left:143px;top:372px;width:20px;text-align:right;transform-origin:100% 0;color:#000;">7</div>
<div class="t" style="left:166px;top:372px;width:20px;text-align:right;transform-origin:100% 0;color:#000;">12</div>
<div class="t" style="left:189px;top:372px;width:20px;text-align:right;transform-origin:100% 0;color:#000;">0</div>
<div class="t" style="left:213px;top:372px;transform-origin:0 0;color:#000;">Nu...</div>
<div style="left:40px;top:319px;width:1px;height:68px;background:#ECE9D8;"></div>
<div style="left:108px;top:319px;width:1px;height:68px;background:#ECE9D8;"></div>
<div style="left:142px;top:319px;width:1px;height:68px;background:#ECE9D8;"></div>
<div style="left:165px;top:319px;width:1px;height:68px;background:#ECE9D8;"></div>
<div style="left:188px;top:319px;width:1px;height:68px;background:#ECE9D8;"></div>
<div style="left:211px;top:319px;width:1px;height:68px;background:#ECE9D8;"></div>
<div style="left:245px;top:319px;width:1px;height:68px;background:#ECE9D8;"></div>
<div style="left:363px;top:319px;width:1px;height:68px;background:#ECE9D8;"></div>
<div class="t" style="left:367px;top:304px;transform-origin:0 0;">Dat...</div>
<div style="left:400px;top:303px;width:1px;height:13px;background:#ACA899;"></div>
<div style="left:401px;top:303px;width:1px;height:13px;background:#fff;"></div>
<div class="t" style="left:404px;top:304px;transform-origin:0 0;">Name</div>
<div style="left:468px;top:303px;width:1px;height:13px;background:#ACA899;"></div>
<div style="left:469px;top:303px;width:1px;height:13px;background:#fff;"></div>
<div class="t" style="left:472px;top:304px;transform-origin:0 0;">Type</div>
<div style="left:502px;top:303px;width:1px;height:13px;background:#ACA899;"></div>
<div style="left:503px;top:303px;width:1px;height:13px;background:#fff;"></div>
<div class="t" style="left:506px;top:304px;transform-origin:0 0;">L...</div>
<div style="left:525px;top:303px;width:1px;height:13px;background:#ACA899;"></div>
<div style="left:526px;top:303px;width:1px;height:13px;background:#fff;"></div>
<div class="t" style="left:529px;top:304px;transform-origin:0 0;">I...</div>
<div style="left:548px;top:303px;width:1px;height:13px;background:#ACA899;"></div>
<div style="left:549px;top:303px;width:1px;height:13px;background:#fff;"></div>
<div class="t" style="left:552px;top:304px;transform-origin:0 0;">D...</div>
<div style="left:571px;top:303px;width:1px;height:13px;background:#ACA899;"></div>
<div style="left:572px;top:303px;width:1px;height:13px;background:#fff;"></div>
<div class="t" style="left:575px;top:304px;transform-origin:0 0;">Nat...</div>
<div style="left:605px;top:303px;width:1px;height:13px;background:#ACA899;"></div>
<div style="left:606px;top:303px;width:1px;height:13px;background:#fff;"></div>
<div class="t" style="left:609px;top:304px;transform-origin:0 0;">Description</div>
<div style="left:364px;top:319px;width:36px;height:16px;background:#316AC5;"></div>
<div style="left:401px;top:319px;width:67px;height:16px;background:#316AC5;"></div>
<div style="left:469px;top:319px;width:33px;height:16px;background:#316AC5;"></div>
<div style="left:503px;top:319px;width:22px;height:16px;background:#316AC5;"></div>
<div style="left:526px;top:319px;width:22px;height:16px;background:#316AC5;"></div>
<div style="left:549px;top:319px;width:22px;height:16px;background:#316AC5;"></div>
<div style="left:572px;top:319px;width:33px;height:16px;background:#316AC5;"></div>
<div style="left:606px;top:319px;width:117px;height:16px;background:#316AC5;"></div>
<div style="left:364px;top:335px;width:360px;height:1px;background:#ECE9D8;"></div>
<div class="t" style="left:364px;top:321px;width:34px;text-align:right;transform-origin:100% 0;color:#fff;">1</div>
<div class="t" style="left:402px;top:321px;transform-origin:0 0;color:#fff;">COD_CUS</div>
<div class="t" style="left:470px;top:321px;transform-origin:0 0;color:#fff;">Alph...</div>
<div class="t" style="left:503px;top:321px;width:20px;text-align:right;transform-origin:100% 0;color:#fff;">10</div>
<div class="t" style="left:526px;top:321px;width:20px;text-align:right;transform-origin:100% 0;color:#fff;">0</div>
<div class="t" style="left:549px;top:321px;width:20px;text-align:right;transform-origin:100% 0;color:#fff;">0</div>
<div class="t" style="left:573px;top:321px;transform-origin:0 0;color:#fff;">Alph...</div>
<div style="left:364px;top:352px;width:360px;height:1px;background:#ECE9D8;"></div>
<div class="t" style="left:364px;top:338px;width:34px;text-align:right;transform-origin:100% 0;color:#000;">11</div>
<div class="t" style="left:402px;top:338px;transform-origin:0 0;color:#000;">OFF_NUM</div>
<div class="t" style="left:470px;top:338px;transform-origin:0 0;color:#000;">Pac...</div>
<div class="t" style="left:503px;top:338px;width:20px;text-align:right;transform-origin:100% 0;color:#000;">3</div>
<div class="t" style="left:526px;top:338px;width:20px;text-align:right;transform-origin:100% 0;color:#000;">5</div>
<div class="t" style="left:549px;top:338px;width:20px;text-align:right;transform-origin:100% 0;color:#000;">0</div>
<div class="t" style="left:573px;top:338px;transform-origin:0 0;color:#000;">Nu...</div>
<div style="left:364px;top:369px;width:360px;height:1px;background:#ECE9D8;"></div>
<div class="t" style="left:364px;top:355px;width:34px;text-align:right;transform-origin:100% 0;color:#000;">14</div>
<div class="t" style="left:402px;top:355px;transform-origin:0 0;color:#000;">ACC_NUM</div>
<div class="t" style="left:470px;top:355px;transform-origin:0 0;color:#000;">Pac...</div>
<div class="t" style="left:503px;top:355px;width:20px;text-align:right;transform-origin:100% 0;color:#000;">6</div>
<div class="t" style="left:526px;top:355px;width:20px;text-align:right;transform-origin:100% 0;color:#000;">10</div>
<div class="t" style="left:549px;top:355px;width:20px;text-align:right;transform-origin:100% 0;color:#000;">0</div>
<div class="t" style="left:573px;top:355px;transform-origin:0 0;color:#000;">Nu...</div>
<div style="left:364px;top:386px;width:360px;height:1px;background:#ECE9D8;"></div>
<div class="t" style="left:364px;top:372px;width:34px;text-align:right;transform-origin:100% 0;color:#000;">20</div>
<div class="t" style="left:402px;top:372px;transform-origin:0 0;color:#000;">AMOUNT</div>
<div class="t" style="left:470px;top:372px;transform-origin:0 0;color:#000;">Pac...</div>
<div class="t" style="left:503px;top:372px;width:20px;text-align:right;transform-origin:100% 0;color:#000;">7</div>
<div class="t" style="left:526px;top:372px;width:20px;text-align:right;transform-origin:100% 0;color:#000;">12</div>
<div class="t" style="left:549px;top:372px;width:20px;text-align:right;transform-origin:100% 0;color:#000;">0</div>
<div class="t" style="left:573px;top:372px;transform-origin:0 0;color:#000;">Nu...</div>
<div style="left:400px;top:319px;width:1px;height:68px;background:#ECE9D8;"></div>
<div style="left:468px;top:319px;width:1px;height:68px;background:#ECE9D8;"></div>
<div style="left:502px;top:319px;width:1px;height:68px;background:#ECE9D8;"></div>
<div style="left:525px;top:319px;width:1px;height:68px;background:#ECE9D8;"></div>
<div style="left:548px;top:319px;width:1px;height:68px;background:#ECE9D8;"></div>
<div style="left:571px;top:319px;width:1px;height:68px;background:#ECE9D8;"></div>
<div style="left:605px;top:319px;width:1px;height:68px;background:#ECE9D8;"></div>
<div style="left:724px;top:319px;width:1px;height:68px;background:#ECE9D8;"></div>
<div style="left:4px;top:468px;width:720px;height:17px;background:repeating-conic-gradient(#ECE9D8 0 25%, #fff 0 50%) 0 0/2px 2px;"></div>
<div style="left:4px;top:468px;width:17px;height:17px;background:#716F64;"></div>
<div style="left:4px;top:468px;width:16px;height:16px;background:#F1EFE2;"></div>
<div style="left:5px;top:469px;width:15px;height:15px;background:#ACA899;"></div>
<div style="left:5px;top:469px;width:14px;height:14px;background:#fff;"></div>
<div style="left:6px;top:470px;width:13px;height:13px;background:#ECE9D8;"></div>
<div style="left:12px;top:473px;width:1px;height:7px;background:#000;"></div>
<div style="left:11px;top:474px;width:1px;height:5px;background:#000;"></div>
<div style="left:10px;top:475px;width:1px;height:3px;background:#000;"></div>
<div style="left:9px;top:476px;width:1px;height:1px;background:#000;"></div>
<div style="left:21px;top:468px;width:602px;height:17px;background:#716F64;"></div>
<div style="left:21px;top:468px;width:601px;height:16px;background:#F1EFE2;"></div>
<div style="left:22px;top:469px;width:600px;height:15px;background:#ACA899;"></div>
<div style="left:22px;top:469px;width:599px;height:14px;background:#fff;"></div>
<div style="left:23px;top:470px;width:598px;height:13px;background:#ECE9D8;"></div>
<div style="left:707px;top:468px;width:17px;height:17px;background:#716F64;"></div>
<div style="left:707px;top:468px;width:16px;height:16px;background:#F1EFE2;"></div>
<div style="left:708px;top:469px;width:15px;height:15px;background:#ACA899;"></div>
<div style="left:708px;top:469px;width:14px;height:14px;background:#fff;"></div>
<div style="left:709px;top:470px;width:13px;height:13px;background:#ECE9D8;"></div>
<div style="left:714px;top:473px;width:1px;height:7px;background:#000;"></div>
<div style="left:715px;top:474px;width:1px;height:5px;background:#000;"></div>
<div style="left:716px;top:475px;width:1px;height:3px;background:#000;"></div>
<div style="left:717px;top:476px;width:1px;height:1px;background:#000;"></div>
<div style="left:9px;top:494px;width:113px;height:25px;background:#716F64;"></div>
<div style="left:9px;top:494px;width:112px;height:24px;background:#F1EFE2;"></div>
<div style="left:10px;top:495px;width:111px;height:23px;background:#ACA899;"></div>
<div style="left:10px;top:495px;width:110px;height:22px;background:#fff;"></div>
<div style="left:11px;top:496px;width:109px;height:21px;background:#ECE9D8;"></div>
<div class="t" style="left:8px;top:500px;width:113px;text-align:center;transform-origin:50% 0;">Delete Match</div>
<div style="left:645px;top:494px;width:75px;height:25px;background:#716F64;"></div>
<div style="left:645px;top:494px;width:74px;height:24px;background:#F1EFE2;"></div>
<div style="left:646px;top:495px;width:73px;height:23px;background:#ACA899;"></div>
<div style="left:646px;top:495px;width:72px;height:22px;background:#fff;"></div>
<div style="left:647px;top:496px;width:71px;height:21px;background:#ECE9D8;"></div>
<svg style="position:absolute;left:660px;top:501px" width="16" height="13" viewBox="0 0 16 13" shape-rendering="crispEdges">
<rect x="0" y="0" width="16" height="13" rx="1" fill="#4A4AC8"/>
<rect x="1" y="1" width="14" height="11" fill="#E4E4FF"/>
<path d="M3 3H13L8 8Z" fill="#6666DC" shape-rendering="auto"/>
<rect x="3" y="9" width="10" height="1" fill="#5050C8"/>
</svg>
<div class="t" style="left:680px;top:501px;transform-origin:0 0;">Close</div>
</body></html>
